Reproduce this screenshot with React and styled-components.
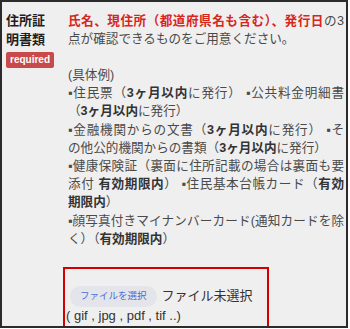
import React from 'react';
import styled, { createGlobalStyle } from 'styled-components';

const Global = createGlobalStyle`
  html, body { margin: 0; padding: 0; background: #ffffff; }
  body { font-family: "Liberation Sans", "Noto Sans CJK JP", sans-serif; }
`;

const Frame = styled.div`
  box-sizing: border-box;
  width: 348px;
  height: 328px;
  border: 2px solid #2b2b2b;
  background: #efefef;
  display: grid;
  grid-template-columns: 61px 1fr;
  overflow: hidden;
`;

const LabelCell = styled.div`
  padding: 10px 0 0 4px;
`;

const LabelText = styled.div`
  width: 3em;
  font-size: 13px;
  line-height: 18.6px;
  font-weight: bold;
  color: #1e1e1e;
`;

const Badge = styled.span`
  display: inline-block;
  margin-top: 2px;
  height: 16px;
  padding: 0 4px;
  border-radius: 2px;
  background: #c84a4a;
  color: #ffffff;
  font-size: 10px;
  font-weight: bold;
  line-height: 16px;
`;

const ContentCell = styled.div`
  min-width: 0;
  padding: 10px 2px 0 0;
  font-size: 12.6px;
  line-height: 18.2px;
  color: #4a4a4a;
`;

const Para = styled.div`
  padding-left: 5px;
  margin-top: ${p => p.$gap || 0}px;
`;

const Line = styled.div`
  white-space: nowrap;
  text-align: left;
  text-align-last: ${p => (p.$full ? 'justify' : 'auto')};
`;

const Red = styled.span`
  color: #d8261d;
  font-weight: bold;
`;

const B = styled.b`
  color: #333333;
  font-weight: bold;
`;

const UploadBox = styled.div`
  box-sizing: border-box;
  width: 206px;
  margin-top: 19px;
  border: 2px solid #d40000;
  padding: 17px 0 8px 1px;
`;

const FileRow = styled.div`
  display: flex;
  align-items: center;
  gap: 5px;
  height: 21px;
`;

const FileButton = styled.span`
  display: inline-flex;
  align-items: center;
  height: 21px;
  margin-left: 4px;
  padding: 0 10px;
  border-radius: 11px;
  background: #e3e5ea;
  color: #4b6ed8;
  font-size: 9.5px;
`;

const FileStatus = styled.span`
  font-size: 13px;
  color: #333333;
`;

const Ext = styled.div`
  font-size: 13px;
  line-height: 18px;
  color: #333333;
`;

export default function App() {
  return (
    <>
      <Global />
      <Frame>
        <LabelCell>
          <LabelText>住所証明書類</LabelText>
          <Badge>required</Badge>
        </LabelCell>
        <ContentCell>
          <Para>
            <Line $full><Red>氏名、現住所（都道府県名も含む）、発行日</Red>の3</Line>
            <Line>点が確認できるものをご用意ください。</Line>
          </Para>
          <Para $gap={17.5}>
            <Line>(具体例)</Line>
            <Line $full>▪住民票（<B>3ヶ月以内</B>に発行） ▪公共料金明細書</Line>
            <Line>（<B>3ヶ月以内</B>に発行）</Line>
            <Line $full>▪金融機関からの文書（<B>3ヶ月以内</B>に発行） ▪そ</Line>
            <Line>の他公的機関からの書類（<B>3ヶ月以内</B>に発行）</Line>
            <Line $full>▪健康保険証（裏面に住所記載の場合は裏面も要</Line>
            <Line $full>添付 <B>有効期限内</B>） ▪住民基本台帳カード（<B>有効</B></Line>
            <Line><B>期限内</B>）</Line>
            <Line $full>▪顔写真付きマイナンバーカード(通知カードを除</Line>
            <Line>く）（<B>有効期限内</B>）</Line>
          </Para>
          <UploadBox>
            <FileRow>
              <FileButton>ファイルを選択</FileButton>
              <FileStatus>ファイル未選択</FileStatus>
            </FileRow>
            <Ext>( gif , jpg , pdf , tif ..)</Ext>
          </UploadBox>
        </ContentCell>
      </Frame>
    </>
  );
}
